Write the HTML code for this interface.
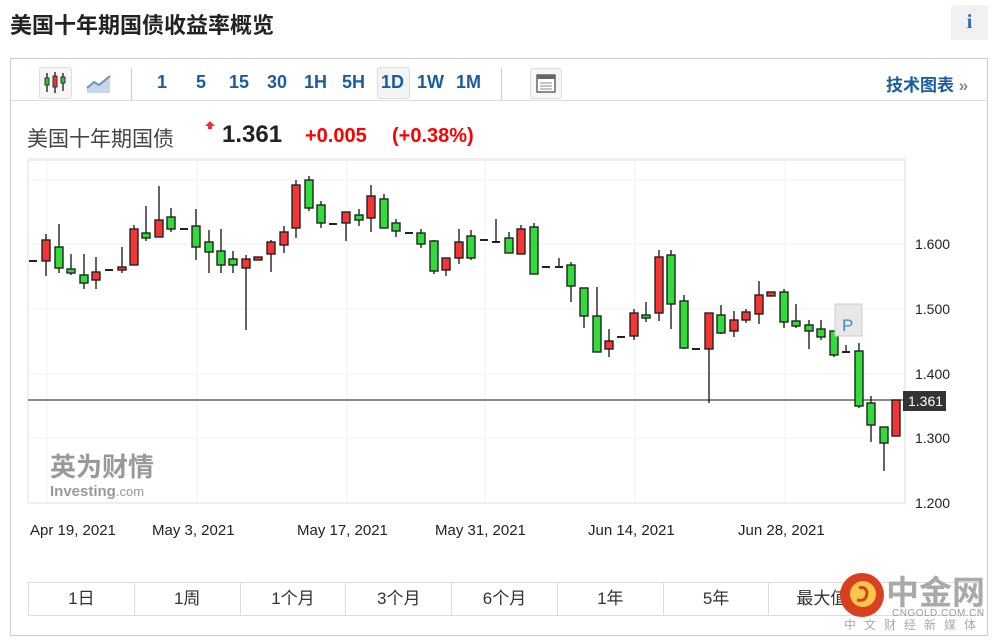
<!DOCTYPE html>
<html><head><meta charset="utf-8"><style>
*{margin:0;padding:0;box-sizing:border-box}
body{width:996px;height:640px;background:#fff;font-family:"Liberation Sans","Noto Sans CJK SC",sans-serif;position:relative;overflow:hidden;color:#333}
.abs{position:absolute}
.title{left:10px;top:8px;font-size:22px;font-weight:bold;color:#222;letter-spacing:0px}
.info{left:951px;top:5px;width:37px;height:35px;background:#f1f1f1;border-radius:2px;color:#2a6ebb;font-weight:bold;font-size:20px;text-align:center;line-height:35px;font-family:"Liberation Serif",serif}
.box{left:10px;top:58px;width:978px;height:578px;border:1px solid #ccc}
.tb{left:11px;top:59px;width:976px;height:42px;border-bottom:1px solid #ddd}
.tf{top:72px;font-size:18px;font-weight:bold;color:#1b5c9e}
.btns{left:28px;top:582px;width:953px;height:34px;border:1px solid #ddd;display:flex}
.btns div{flex:1;border-right:1px solid #ddd;text-align:center;line-height:32px;font-size:17px;color:#333}
.btns div:last-child{border-right:none}
</style></head><body>
<div class="abs title">美国十年期国债收益率概览</div>
<div class="abs info">i</div>
<div class="abs box"></div>
<div class="abs tb"></div>
<div class="abs" style="left:39px;top:67px;width:33px;height:32px;border:1px solid #ddd;border-radius:3px;background:#f6f6f6"></div>
<svg class="abs" style="left:39px;top:67px" width="33" height="32">
<line x1="8" y1="6" x2="8" y2="25" stroke="#333" stroke-width="1.5"/><rect x="6" y="11" width="4" height="7" fill="#2c2" stroke="#333"/>
<line x1="16" y1="5" x2="16" y2="26" stroke="#333" stroke-width="1.5"/><rect x="14" y="9" width="4" height="11" fill="#e33" stroke="#333"/>
<line x1="24" y1="6" x2="24" y2="24" stroke="#333" stroke-width="1.5"/><rect x="22" y="10" width="4" height="6" fill="#2c2" stroke="#333"/>
</svg>
<svg class="abs" style="left:86px;top:72px" width="26" height="22"><path d="M1 16 L8 10 L13 13 L24 4 L24 21 L1 21Z" fill="#c8d7e8"/><path d="M1 16 L8 10 L13 13 L24 4" stroke="#6f93c0" stroke-width="2" fill="none"/></svg>
<div class="abs" style="left:131px;top:68px;width:1px;height:32px;background:#ccc"></div>
<div class="abs tf" style="left:157px">1</div>
<div class="abs tf" style="left:196px">5</div>
<div class="abs tf" style="left:229px">15</div>
<div class="abs tf" style="left:267px">30</div>
<div class="abs tf" style="left:304px">1H</div>
<div class="abs tf" style="left:342px">5H</div>
<div class="abs" style="left:377px;top:67px;width:33px;height:32px;border:1px solid #ddd;border-radius:3px;background:#f4f4f4"></div>
<div class="abs tf" style="left:381px">1D</div>
<div class="abs tf" style="left:417px">1W</div>
<div class="abs tf" style="left:456px">1M</div>
<div class="abs" style="left:501px;top:68px;width:1px;height:32px;background:#ccc"></div>
<div class="abs" style="left:530px;top:68px;width:32px;height:31px;border:1px solid #ddd;border-radius:3px;background:#f6f6f6"></div>
<svg class="abs" style="left:536px;top:74px" width="20" height="19"><rect x="1" y="1" width="18" height="17" fill="#fff" stroke="#666" stroke-width="1.5"/><rect x="1" y="1" width="18" height="4" fill="#666"/><line x1="4" y1="9" x2="16" y2="9" stroke="#888"/><line x1="4" y1="12" x2="16" y2="12" stroke="#888"/><line x1="4" y1="15" x2="16" y2="15" stroke="#888"/></svg>
<div class="abs" style="left:886px;top:71px;font-size:17px;font-weight:bold;color:#1b5c9e">技术图表 <span style="color:#888">»</span></div>

<div class="abs" style="left:27px;top:123px;font-size:21px;color:#444">美国十年期国债</div>
<svg class="abs" style="left:204px;top:120px" width="12" height="10"><path d="M6 1 L11 6 L8 6 L8 9 L4 9 L4 6 L1 6Z" fill="#e33"/></svg>
<div class="abs" style="left:222px;top:121px;font-size:24px;font-weight:bold;color:#222">1.361</div>
<div class="abs" style="left:305px;top:125px;font-size:20px;font-weight:bold;color:#f00">+0.005</div>
<div class="abs" style="left:392px;top:125px;font-size:20px;font-weight:bold;color:#f00">(+0.38%)</div>
<div class="abs" style="left:27px;top:158px;width:880px;height:1px;background:#eee"></div>

<svg class="abs" style="left:0;top:0" width="996" height="640">
<g stroke="#f1f1f3" stroke-width="1">
<line x1="28" y1="180" x2="905" y2="180"/><line x1="28" y1="244" x2="905" y2="244"/><line x1="28" y1="309" x2="905" y2="309"/><line x1="28" y1="374" x2="905" y2="374"/><line x1="28" y1="438" x2="905" y2="438"/>
<line x1="47" y1="160" x2="47" y2="503"/><line x1="197" y1="160" x2="197" y2="503"/><line x1="347" y1="160" x2="347" y2="503"/><line x1="485" y1="160" x2="485" y2="503"/><line x1="635" y1="160" x2="635" y2="503"/><line x1="785" y1="160" x2="785" y2="503"/>
</g>
<rect x="28" y="160" width="877" height="343" fill="none" stroke="#e2e2e2"/>
<line x1="905" y1="160" x2="905" y2="505" stroke="#ddd"/>
<line x1="28" y1="400" x2="905" y2="400" stroke="#444" stroke-width="1.2"/>
<text x="50" y="476" font-family="Noto Sans CJK SC,sans-serif" font-size="26" font-weight="bold" fill="#999">英为财情</text>
<text x="50" y="496" font-family="Liberation Sans,sans-serif" font-size="15" font-weight="bold" fill="#999">Investing<tspan font-weight="normal" font-size="13">.com</tspan></text>
<g id="c" stroke="#222" stroke-width="1.4"></g>
<rect x="835" y="304" width="27" height="32" fill="#e8e8e8" stroke="#ccc"/>
<text x="842" y="331" font-family="Liberation Sans,sans-serif" font-size="17" fill="#3a88d0">P</text>
<rect x="903" y="391" width="43" height="20" fill="#333"/>
<text x="908" y="406" font-family="Liberation Sans,sans-serif" font-size="14" fill="#fff">1.361</text>
<g font-family="Liberation Sans,sans-serif" font-size="14" fill="#222">
<text x="915" y="249">1.600</text><text x="915" y="314">1.500</text><text x="915" y="379">1.400</text><text x="915" y="443">1.300</text><text x="915" y="508">1.200</text>
<text x="30" y="535" font-size="15">Apr 19, 2021</text><text x="152" y="535" font-size="15">May 3, 2021</text><text x="297" y="535" font-size="15">May 17, 2021</text><text x="435" y="535" font-size="15">May 31, 2021</text><text x="588" y="535" font-size="15">Jun 14, 2021</text><text x="738" y="535" font-size="15">Jun 28, 2021</text>
</g>
</svg>
<div class="abs btns"><div>1日</div><div>1周</div><div>1个月</div><div>3个月</div><div>6个月</div><div>1年</div><div>5年</div><div>最大值</div><div></div></div>
<svg class="abs" style="left:836px;top:566px" width="160" height="72">
<circle cx="26" cy="29" r="22" fill="#d9401f"/>
<circle cx="27" cy="28" r="13" fill="#f7c64a"/>
<path d="M21 34 Q31 36 31 26 Q29 20 23 22" stroke="#d9401f" stroke-width="3" fill="none"/>
<text x="50" y="38" font-family="Noto Sans CJK SC,sans-serif" font-weight="bold" font-size="33" fill="#a9a9a9">中金网</text>
<text x="56" y="50" font-family="Liberation Sans,sans-serif" font-size="10" fill="#999" letter-spacing="0.5">CNGOLD.COM.CN</text>
<text x="8" y="63" font-family="Noto Sans CJK SC,sans-serif" font-size="12" fill="#aaa" letter-spacing="8">中文财经新媒体</text>
</svg>
<script>
var d=[[33,261,261,261,261,'d'],[46,240,261,234,276,'r'],[59,247,268,224,273,'g'],[71,269,273,254,275,'g'],[84,275,283,254,289,'g'],[96,272,280,257,289,'r'],[109,270,270,270,270,'d'],[122,267,270,247,273,'r'],[134,229,265,225,265,'r'],[146,233,238,206,241,'g'],[159,220,237,186,237,'r'],[171,217,229,208,232,'g'],[184,229,229,229,229,'d'],[196,226,247,209,260,'g'],[209,242,252,230,273,'g'],[221,251,265,229,273,'g'],[233,259,265,251,273,'g'],[246,259,268,255,330,'r'],[258,257,259,257,260,'r'],[271,242,254,240,272,'r'],[284,232,245,226,253,'r'],[296,185,228,180,238,'r'],[309,180,208,176,211,'g'],[321,205,223,201,228,'g'],[333,224,224,224,224,'d'],[346,212,223,212,241,'r'],[359,215,220,209,226,'g'],[371,196,218,185,232,'r'],[384,199,228,194,228,'g'],[396,223,231,219,237,'g'],[409,233,233,233,233,'d'],[421,233,244,229,248,'g'],[434,241,271,240,274,'g'],[446,258,270,258,276,'r'],[459,242,258,229,264,'r'],[471,236,258,230,260,'g'],[484,240,240,240,240,'d'],[496,242,242,219,242,'d'],[509,238,253,232,253,'g'],[521,229,254,225,254,'r'],[534,227,274,223,274,'g'],[546,267,267,267,267,'d'],[559,267,267,258,267,'d'],[571,265,286,262,302,'g'],[584,288,316,288,328,'g'],[597,316,352,287,352,'g'],[609,341,349,329,357,'r'],[621,337,337,337,337,'d'],[634,313,336,309,340,'r'],[646,315,318,302,322,'g'],[659,257,313,250,321,'r'],[671,255,304,250,329,'g'],[684,301,348,295,349,'g'],[696,349,349,349,349,'d'],[709,313,349,313,403,'r'],[721,315,333,305,334,'g'],[734,320,331,311,337,'r'],[746,312,320,309,323,'r'],[759,295,314,281,324,'r'],[771,292,296,292,296,'r'],[784,292,322,289,328,'g'],[796,321,326,304,328,'g'],[809,325,331,320,349,'g'],[821,329,337,320,340,'g'],[834,331,355,331,357,'g'],[846,352,352,345,352,'d'],[859,351,406,343,408,'g'],[871,403,425,396,442,'g'],[884,427,443,427,471,'g'],[896,400,436,400,436,'r']];
var g=document.getElementById('c'),s='';
d.forEach(function(c){var x=c[0];
if(c[3]<c[4])s+='<line x1="'+x+'" y1="'+c[3]+'" x2="'+x+'" y2="'+c[4]+'"/>';
if(c[5]=='d')s+='<rect x="'+(x-4)+'" y="'+(c[1]-1)+'" width="8" height="2" fill="#222" stroke="none"/>';
else s+='<rect x="'+(x-4)+'" y="'+c[1]+'" width="8" height="'+Math.max(3,c[2]-c[1])+'" fill="'+(c[5]=='g'?'#2fdc3a':'#f53434')+'"/>';});
g.innerHTML=s;
</script>
</body></html>
